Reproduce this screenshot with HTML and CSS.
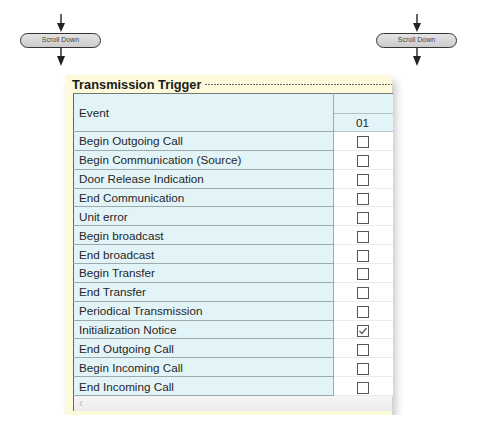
FILE: index.html
```html
<!DOCTYPE html>
<html>
  <head>
    <link rel="stylesheet" href="styles.css">
  </head>
  <body>
    <div class="flow">
      <div class="step">
        <svg class="arrow-in" width="12" height="19" viewBox="0 0 12 19">
          <line x1="6" y1="0" x2="6" y2="12" stroke="#222" stroke-width="1.4"/>
          <polygon points="2,9 10,9 6,18" fill="#222"/>
        </svg>
        <div class="pill">Scroll Down</div>
        <svg class="arrow-out" width="12" height="18" viewBox="0 0 12 18">
          <line x1="6" y1="0" x2="6" y2="11" stroke="#222" stroke-width="1.4"/>
          <polygon points="2,8 10,8 6,18" fill="#222"/>
        </svg>
      </div>
      <div class="step">
        <svg class="arrow-in" width="12" height="19" viewBox="0 0 12 19">
          <line x1="6" y1="0" x2="6" y2="12" stroke="#222" stroke-width="1.4"/>
          <polygon points="2,9 10,9 6,18" fill="#222"/>
        </svg>
        <div class="pill">Scroll Down</div>
        <svg class="arrow-out" width="12" height="18" viewBox="0 0 12 18">
          <line x1="6" y1="0" x2="6" y2="11" stroke="#222" stroke-width="1.4"/>
          <polygon points="2,8 10,8 6,18" fill="#222"/>
        </svg>
      </div>
    </div>

    <div class="panel">
      <div class="legend">
        <span class="legend-text">Transmission Trigger</span>
        <span class="legend-line"></span>
      </div>

      <table class="trigger">
        <tr class="head">
          <td class="event" rowspan="2">Event</td>
          <td class="col"></td>
        </tr>
        <tr class="head2">
          <td class="col">01</td>
        </tr>
        <tr><td class="event">Begin Outgoing Call</td><td class="chk"><span class="box"></span></td></tr>
        <tr><td class="event">Begin Communication (Source)</td><td class="chk"><span class="box"></span></td></tr>
        <tr><td class="event">Door Release Indication</td><td class="chk"><span class="box"></span></td></tr>
        <tr><td class="event">End Communication</td><td class="chk"><span class="box"></span></td></tr>
        <tr><td class="event">Unit error</td><td class="chk"><span class="box"></span></td></tr>
        <tr><td class="event">Begin broadcast</td><td class="chk"><span class="box"></span></td></tr>
        <tr><td class="event">End broadcast</td><td class="chk"><span class="box"></span></td></tr>
        <tr><td class="event">Begin Transfer</td><td class="chk"><span class="box"></span></td></tr>
        <tr><td class="event">End Transfer</td><td class="chk"><span class="box"></span></td></tr>
        <tr><td class="event">Periodical Transmission</td><td class="chk"><span class="box"></span></td></tr>
        <tr>
          <td class="event">Initialization Notice</td>
          <td class="chk">
            <span class="box">
              <svg width="10" height="10" viewBox="0 0 10 10">
                <polyline points="1.5,5 4,7.5 8.5,2" fill="none" stroke="#555" stroke-width="1.2"/>
              </svg>
            </span>
          </td>
        </tr>
        <tr><td class="event">End Outgoing Call</td><td class="chk"><span class="box"></span></td></tr>
        <tr><td class="event">Begin Incoming Call</td><td class="chk"><span class="box"></span></td></tr>
        <tr><td class="event">End Incoming Call</td><td class="chk"><span class="box"></span></td></tr>
      </table>

      <div class="hscroll">&lsaquo;</div>
    </div>
  </body>
</html>
```

FILE: styles.css
```css
body {
  margin: 0;
  background-color: #fff;
  font-family: "Liberation Sans", Arial, sans-serif;
}

/* flow chart steps */
.flow {
  display: flex;
  justify-content: space-between;
  padding: 14px 20px 0 20px;
}

.step {
  display: flex;
  flex-direction: column;
  align-items: center;
  width: 81px;
}

.step svg {
  display: block;
}

.pill {
  box-sizing: border-box;
  width: 81px;
  height: 15px;
  border: 1.5px solid #333;
  border-radius: 8px;
  background: linear-gradient(#e4e4e4, #cbcbcb);
  color: #444;
  font-size: 7px;
  line-height: 12px;
  text-align: center;
}

/* settings panel */
.panel {
  width: 326px;
  margin: 9px 0 0 66px;
  padding: 0 0 4px 6px;
  box-sizing: border-box;
  background-color: #fdfadc;
  box-shadow: 4px 6px 8px rgba(0, 0, 0, 0.22);
}

.legend {
  display: flex;
  align-items: center;
  height: 18px;
}

.legend-text {
  font-size: 12.8px;
  font-weight: bold;
  color: #1a1a1a;
  padding-right: 4px;
}

.legend-line {
  flex: 1;
  height: 1px;
  margin-top: 1px;
  background-image: repeating-linear-gradient(90deg, #666 0 2px, transparent 2px 3px);
}

.trigger {
  width: 320px;
  margin-left: 1px;
  border-collapse: collapse;
  border-top: 1px solid #777;
  border-left: 1px solid #666;
  font-size: 11.7px;
  color: #262626;
}

.trigger td {
  padding: 0;
}

.trigger tr {
  height: 18.86px;
}

.trigger .head {
  height: 20px;
}

.trigger .head2 {
  height: 18px;
}

.event {
  width: 254px;
  padding-left: 5px !important;
  background-color: #e3f4f8;
  border-bottom: 1px solid #9eabad;
  border-right: 1px solid #9eabad;
}

.col {
  background-color: #e3f4f8;
  border-bottom: 1px solid #b3c3c7;
  text-align: center;
}

.head2 .col {
  padding-right: 2px !important;
}

.chk {
  background-color: #fff;
  border-bottom: 1px solid #ececec;
  text-align: center;
}

.box {
  box-sizing: border-box;
  display: inline-block;
  width: 12px;
  height: 12px;
  margin-top: 3px;
  margin-right: 2px;
  border: 1px solid #555;
  background-color: #fff;
  vertical-align: top;
}

.box svg {
  display: block;
}

.hscroll {
  height: 15px;
  margin-left: 1px;
  padding-left: 5px;
  border-left: 1px solid #666;
  background: linear-gradient(#f5f5f3, #ececea);
  color: #bbb;
  font-size: 12px;
  line-height: 15px;
}
```
